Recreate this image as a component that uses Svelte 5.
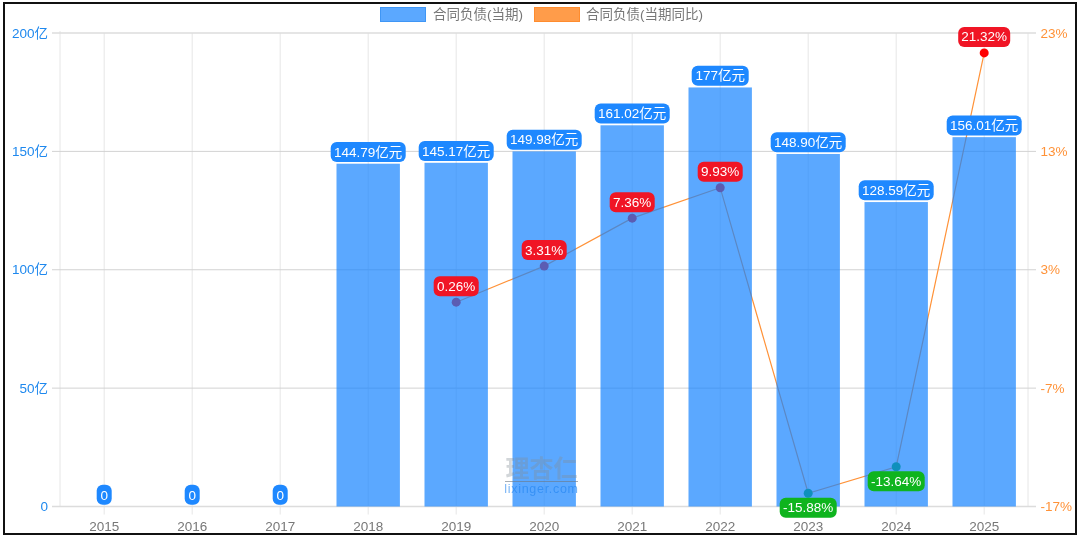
<script>
  const years = [2015, 2016, 2017, 2018, 2019, 2020, 2021, 2022, 2023, 2024, 2025];
  const amounts = [0, 0, 0, 144.79, 145.17, 149.98, 161.02, 177, 148.9, 128.59, 156.01];
  const amountLabels = ['0', '0', '0', '144.79亿元', '145.17亿元', '149.98亿元', '161.02亿元', '177亿元', '148.90亿元', '128.59亿元', '156.01亿元'];
  const growth = [null, null, null, null, 0.26, 3.31, 7.36, 9.93, -15.88, -13.64, 21.32];

  const left = 60;
  const right = 1028;
  const top = 33;
  const bottom = 506.5;

  const cx = (i) => 104.2 + i * 88;
  const yBar = (v) => bottom - (v / 200) * (bottom - top);
  const yLine = (v) => bottom - ((v + 17) / 40) * (bottom - top);

  const leftTicks = [['200亿', 200], ['150亿', 150], ['100亿', 100], ['50亿', 50], ['0', 0]];
  const rightTicks = [['23%', 23], ['13%', 13], ['3%', 3], ['-7%', -7], ['-17%', -17]];

  const points = growth.map((g, i) => (g === null ? null : { x: cx(i), y: yLine(g), g })).filter(Boolean);
  const linePath = points.map((p) => `${p.x},${p.y.toFixed(1)}`).join(' ');

  const pctWidth = (g) => (g <= -10 ? 57 : g >= 10 ? 52 : 45);
  // labels sit above the dot, the two negative ones drop under it
  const pctY = (p) => (p.g < 0 ? p.y + 14.5 : p.y - 16);
  const barWidth = (label) => (label === '0' ? 15 : label === '177亿元' ? 57 : 75);
</script>

<div class="frame">
  <svg class="chart" viewBox="0 0 1070 529" width="1070" height="529">
    <g transform="translate(-5 -4)">
      <g class="legend">
        <rect class="swatch-blue" x="380.5" y="7.5" width="45" height="14" />
        <text x="433" y="19">合同负债(当期)</text>
        <rect class="swatch-orange" x="534.5" y="7.5" width="45" height="14" />
        <text x="586" y="19">合同负债(当期同比)</text>
      </g>

      {#each years as _, i}
        <line class="grid" x1={cx(i)} x2={cx(i)} y1={top} y2={bottom + 8} />
      {/each}
      <line class="grid" x1={left} x2={left} y1={top - 2} y2={bottom} />
      <line class="grid" x1={right} x2={right} y1={top} y2={bottom} />
      {#each leftTicks as tick}
        <line class="grid-h" class:edge={tick[1] === 0 || tick[1] === 200} x1={left - 8} x2={right + 8} y1={yBar(tick[1])} y2={yBar(tick[1])} />
      {/each}

      <polyline class="growth" points={linePath} />
      {#each points as p}
        <circle cx={p.x} cy={p.y} r="4.5" fill={p.g < 0 ? '#00b020' : '#ff0000'} />
      {/each}

      {#each amounts as v, i}
        {#if v > 0}
          <rect class="bar" x={cx(i) - 31.7} y={yBar(v)} width="63.4" height={bottom - yBar(v)} />
        {/if}
      {/each}

      <g class="mark">
        <text class="mark-cn" x="541.5" y="477">理杏仁</text>
        <line x1="505" x2="578" y1="481.5" y2="481.5" />
        <text class="mark-en" x="541.5" y="493">lixinger.com</text>
      </g>

      {#each leftTicks as tick}
        <text class="tick-left" x="48" y={yBar(tick[1]) + 4.5}>{tick[0]}</text>
      {/each}
      {#each rightTicks as tick}
        <text class="tick-right" x="1040.5" y={yLine(tick[1]) + 4.5}>{tick[0]}</text>
      {/each}
      {#each years as year, i}
        <text class="year" x={cx(i)} y="531">{year}</text>
      {/each}

      {#each amounts as v, i}
        {@const w = barWidth(amountLabels[i])}
        <rect class="tag-blue" x={cx(i) - w / 2} y={yBar(v) - 21.7} width={w} height="20" rx="6" />
        <text class="tag-text" x={cx(i)} y={yBar(v) - 7}>{amountLabels[i]}</text>
      {/each}

      {#each points as p}
        {@const w = pctWidth(p.g)}
        <rect class={p.g < 0 ? 'tag-green' : 'tag-red'} x={p.x - w / 2} y={pctY(p) - 10} width={w} height="20" rx="6" />
        <text class="tag-text" x={p.x} y={pctY(p) + 4.5}>{p.g.toFixed(2)}%</text>
      {/each}
    </g>
  </svg>
</div>

<style>
  :global(body) {
    margin: 0;
    background: #fff;
  }
  .frame {
    width: 1070px;
    height: 529px;
    margin: 2px 0 0 3px;
    border: 2px solid #111;
    background: #fff;
    overflow: hidden;
  }
  .chart {
    display: block;
    font-family: "Liberation Sans", "Noto Sans CJK SC", sans-serif;
    font-size: 13.5px;
    filter: blur(0.3px);
  }
  .legend text {
    fill: #777;
  }
  .swatch-blue {
    fill: #5ba8ff;
    stroke: #3f96f5;
  }
  .swatch-orange {
    fill: #ff9c4a;
    stroke: #ff8c2e;
  }
  .grid {
    stroke: #e6e6e6;
    stroke-width: 1;
  }
  .grid-h {
    stroke: #d2d2d2;
    stroke-width: 1;
  }
  .grid-h.edge {
    stroke: #dcdcdc;
    stroke-width: 1.5;
  }
  .growth {
    fill: none;
    stroke: #ff9238;
    stroke-width: 1.2;
  }
  .bar {
    fill: rgba(21, 131, 255, 0.7);
  }
  .tick-left {
    fill: #1e88ee;
    text-anchor: end;
  }
  .tick-right {
    fill: #ff9238;
  }
  .year {
    fill: #777;
    text-anchor: middle;
  }
  .tag-blue {
    fill: #1e88ff;
  }
  .tag-red {
    fill: #f01525;
  }
  .tag-green {
    fill: #0fb41e;
  }
  .tag-text {
    fill: #fff;
    text-anchor: middle;
    font-size: 13.5px;
  }
  .mark {
    filter: blur(0.6px);
  }
  .mark-cn {
    fill: rgba(130, 140, 150, 0.36);
    font-size: 24px;
    font-weight: 700;
    text-anchor: middle;
  }
  .mark-en {
    fill: rgba(30, 130, 240, 0.6);
    font-size: 12.5px;
    letter-spacing: 0.7px;
    text-anchor: middle;
  }
  .mark line {
    stroke: rgba(110, 120, 130, 0.6);
  }
</style>
